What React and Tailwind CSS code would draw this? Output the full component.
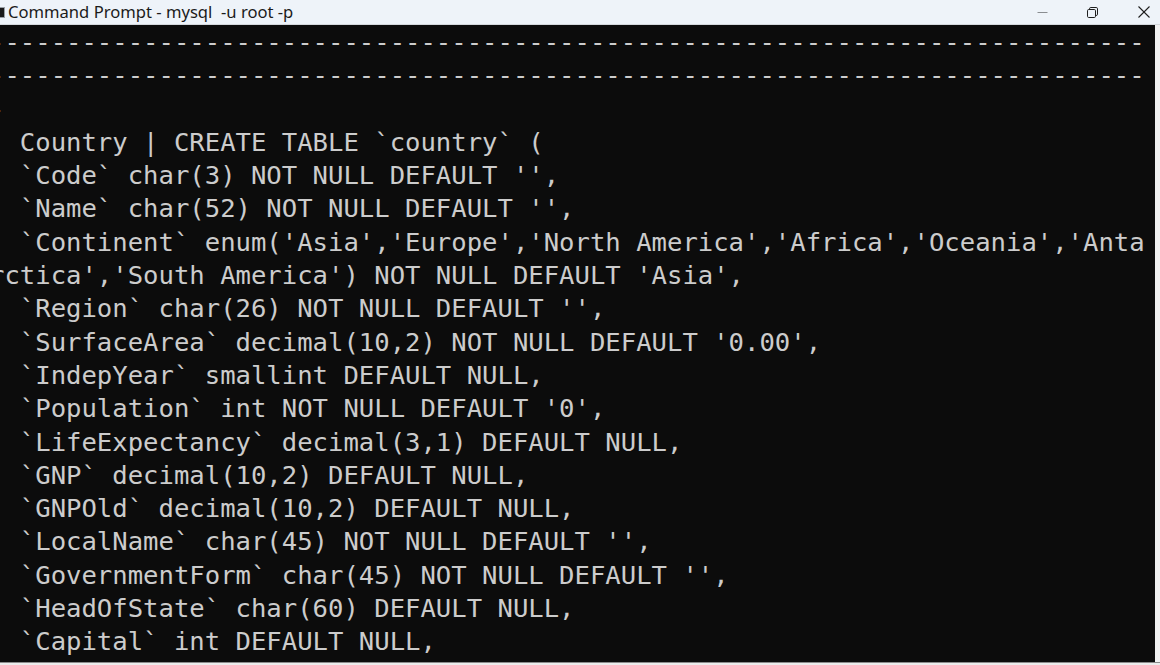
import React from "react"

const DASHES = "-".repeat(75)

const LINES = [
    DASHES,
    DASHES,
    "-",
    "| Country | CREATE TABLE `country` (",
    "  `Code` char(3) NOT NULL DEFAULT '',",
    "  `Name` char(52) NOT NULL DEFAULT '',",
    "  `Continent` enum('Asia','Europe','North America','Africa','Oceania','Anta",
    "rctica','South America') NOT NULL DEFAULT 'Asia',",
    "  `Region` char(26) NOT NULL DEFAULT '',",
    "  `SurfaceArea` decimal(10,2) NOT NULL DEFAULT '0.00',",
    "  `IndepYear` smallint DEFAULT NULL,",
    "  `Population` int NOT NULL DEFAULT '0',",
    "  `LifeExpectancy` decimal(3,1) DEFAULT NULL,",
    "  `GNP` decimal(10,2) DEFAULT NULL,",
    "  `GNPOld` decimal(10,2) DEFAULT NULL,",
    "  `LocalName` char(45) NOT NULL DEFAULT '',",
    "  `GovernmentForm` char(45) NOT NULL DEFAULT '',",
    "  `HeadOfState` char(60) DEFAULT NULL,",
    "  `Capital` int DEFAULT NULL,",
]

function TitleBar() {
    return (
        <div className="h-[25px] flex items-center bg-[#eef3f9] border-b border-[#d4d8dd] shrink-0">
            <div className="w-[5px] h-[11px] bg-[#1a1a1a] border-y border-r border-[#9aa0a6] mr-[3px]" />
            <span className="text-[16.6px] text-[#1b1b1b] leading-none whitespace-pre font-['Noto_Sans',sans-serif]">
                Command Prompt - mysql  -u root -p
            </span>
            <div className="ml-auto flex items-center h-full pr-[10px]">
                <svg width="11" height="11" viewBox="0 0 11 11">
                    <line x1="0.5" y1="5.5" x2="10.5" y2="5.5" stroke="#8a8d91" strokeWidth="1" />
                </svg>
                <svg className="ml-[39px]" width="11" height="11" viewBox="0 0 11 11" fill="none" stroke="#1f1f1f" strokeWidth="1">
                    <rect x="0.5" y="2.5" width="8" height="8" rx="1.2" />
                    <path d="M2.5 2.5 V1.8 Q2.5 0.5 3.8 0.5 H9.2 Q10.5 0.5 10.5 1.8 V7.2 Q10.5 8.5 9.2 8.5 H8.5" />
                </svg>
                <svg className="ml-[40px]" width="12" height="12" viewBox="0 0 12 12" stroke="#1f1f1f" strokeWidth="1.1">
                    <line x1="0.5" y1="0.5" x2="11.5" y2="11.5" />
                    <line x1="11.5" y1="0.5" x2="0.5" y2="11.5" />
                </svg>
            </div>
        </div>
    )
}

export default function App() {
    return (
        <div className="w-[1160px] h-[665px] flex flex-col bg-[#f3f3f3] overflow-hidden">
            <TitleBar />
            <div className="flex h-[637px] shrink-0">
                <div className="w-[1155px] h-full bg-[#0c0c0c] overflow-hidden">
                    <pre className="-ml-[11px] pt-[1px] text-[25.6px] leading-[33.3px] text-[#cccccc] font-['DejaVu_Sans_Mono',monospace]">
                        {LINES.join("\n")}
                    </pre>
                </div>
                <div className="flex-1 bg-[#f1f1f1]" />
            </div>
            <div className="h-[1px] shrink-0 bg-[#8c8c8c]" />
            <div className="flex-1 bg-[#ececec]" />
        </div>
    )
}
